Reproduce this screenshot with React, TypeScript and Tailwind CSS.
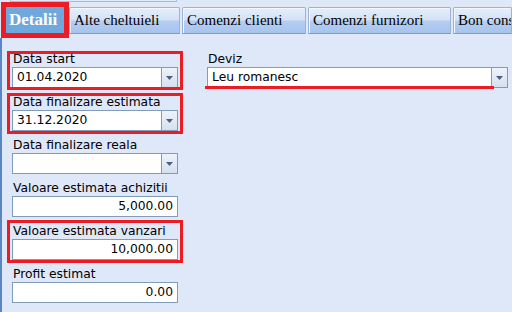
const tabs = [
  { label: "Alte cheltuieli", w: "w-[111px] shrink-0" },
  { label: "Comenzi clienti", w: "w-[124px] shrink-0" },
  { label: "Comenzi furnizori", w: "w-[143px] shrink-0" },
  { label: "Bon consum", w: "min-w-0 flex-1 overflow-hidden" },
];

function Arrow() {
  return (
    <svg width="7" height="4" viewBox="0 0 7 4" className="block">
      <path d="M0 0h7L3.5 4z" fill="#4d5f7f" />
    </svg>
  );
}

function Field({
  label,
  value,
  combo,
  right,
  mark,
  className = "",
}: {
  label: string;
  value?: string;
  combo?: boolean;
  right?: boolean;
  mark?: string;
  className?: string;
}) {
  return (
    <div className={`relative ${className}`}>
      <div className="h-[22px] pt-[6px] pl-[1px] text-[12.3px] leading-[16px] text-black">{label}</div>
      <div className="flex h-[21px] border border-[#7f9db9] bg-white">
        <div
          className={`flex-1 overflow-hidden whitespace-nowrap text-[12.3px] leading-[19px] text-black ${
            right ? "pr-[4px] text-right" : "pl-[4px]"
          }`}
        >
          {value}
        </div>
        {combo ? (
          <div className="flex w-[16px] items-center justify-center border-l border-[#7f9db9] bg-[linear-gradient(#eef3fa,#d5e0ef)]">
            <Arrow />
          </div>
        ) : null}
      </div>
      {mark ? (
        <div className={`pointer-events-none absolute -left-[5px] -right-[5px] border-[3px] border-[#ec1c24] ${mark}`} />
      ) : null}
    </div>
  );
}

export default function App() {
  return (
    <div className="h-[312px] w-[512px] overflow-hidden bg-[#dfe8f8] font-['DejaVu_Sans',sans-serif]">
      <div className="ml-[10px] h-[2px] w-[167px] border-x border-b border-[#a8bbd7]" />

      <div className="flex h-[36px] items-start overflow-hidden">
        <div className="ml-[1px] h-[36px] w-[68px] shrink-0 border-[5px] border-[#ec1c24] bg-[#6fa8dd]">
          <div className="whitespace-nowrap pl-[3px] pt-[4px] font-['Liberation_Serif',serif] text-[17px] font-bold leading-[18px] text-white">
            Detalii
          </div>
        </div>
        {tabs.map((t, i) => (
          <div
            key={t.label}
            className={`mt-[5px] h-[27px] rounded-t-[2px] border border-[#9cb3d4] border-b-[#7f9ac4] bg-[linear-gradient(#e6eefb,#d3e2f7_48%,#b5cef1_52%,#a6c4ee)] shadow-[inset_1px_1px_0_#f4f8fd] ${t.w} ${
              i === 0 ? "" : "ml-[2px]"
            }`}
          >
            <div className="whitespace-nowrap pl-[4px] pt-[4px] font-['Liberation_Serif',serif] text-[15px] leading-[17px] text-black">
              {t.label}
            </div>
          </div>
        ))}
      </div>

      <div className="flex h-[274px] border-l-2 border-[#5a86c4] pl-[10px] pt-[7px]">
        <div className="flex w-[166px] shrink-0 flex-col">
          <Field label="Data start" value="01.04.2020" combo mark="top-[6px] -bottom-[2px]" />
          <Field label="Data finalizare estimata" value="31.12.2020" combo mark="top-[5px] -bottom-[3px]" />
          <Field label="Data finalizare reala" combo />
          <Field label="Valoare estimata achizitii" value="5,000.00" right />
          <Field label="Valoare estimata vanzari" value="10,000.00" right mark="top-[3px] -bottom-[3px]" />
          <Field label="Profit estimat" value="0.00" right />
        </div>

        <div className="relative ml-[29px] w-[301px] shrink-0 self-start">
          <Field label="Deviz" value="Leu romanesc" combo />
          <div className="pointer-events-none absolute -left-[2px] top-[41px] h-[3px] w-[289px] bg-[#ec1c24]" />
        </div>
      </div>
    </div>
  );
}
